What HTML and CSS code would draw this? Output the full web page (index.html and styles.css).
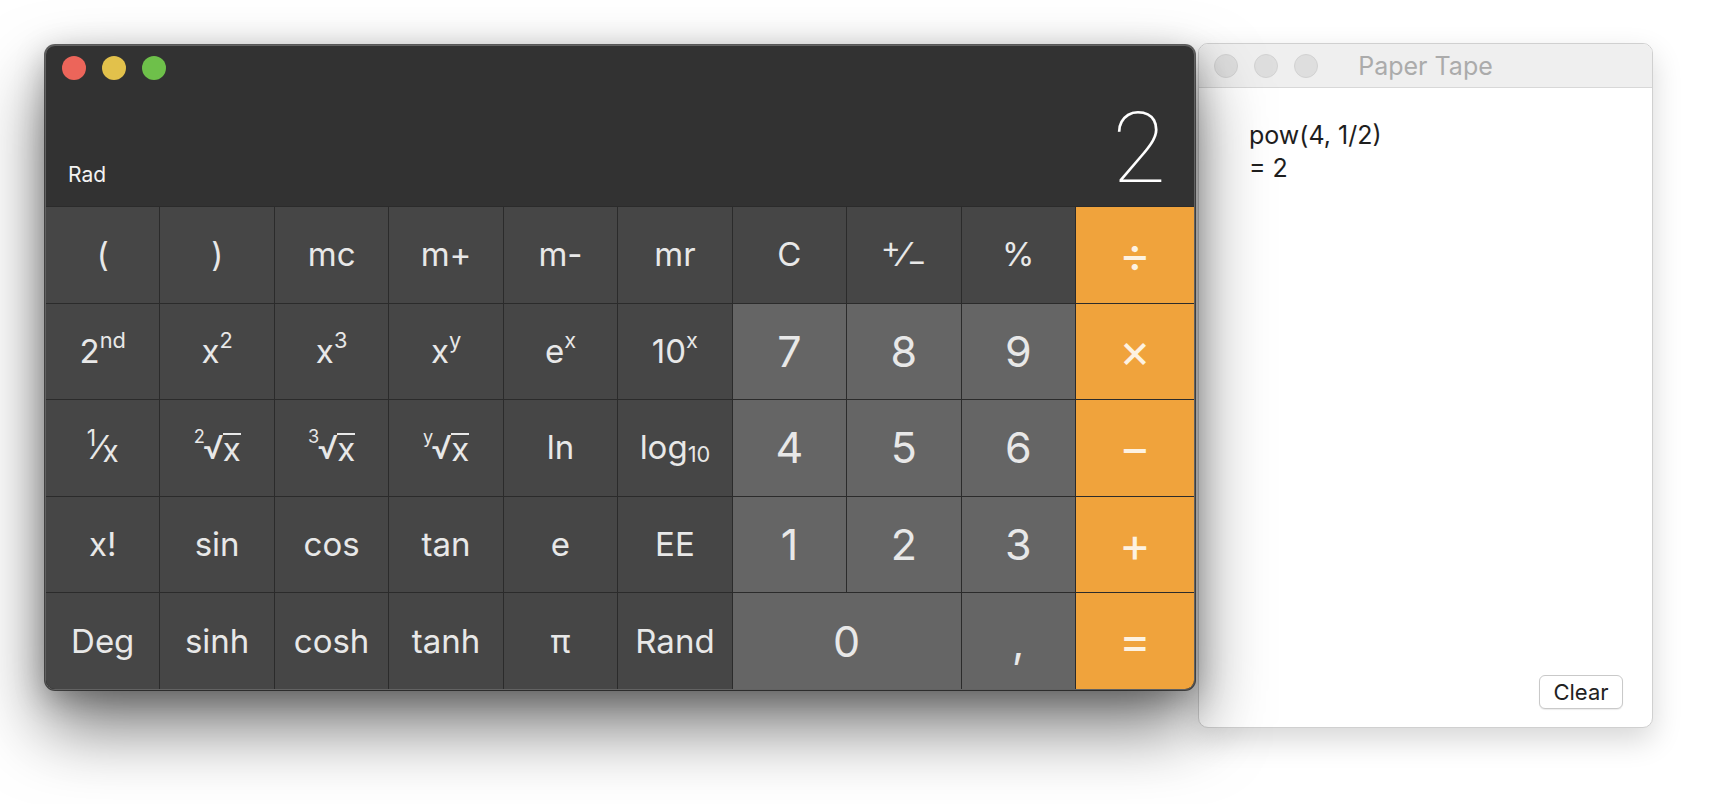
FILE: index.html
```html
<!DOCTYPE html>
<html lang="en">

<head>
    <meta charset="UTF-8">
    <meta name="viewport" content="width=device-width, initial-scale=1.0">
    <title>Calculator</title>
    <link rel="stylesheet" href="styles.css">
</head>

<body>
    <div class="desktop">

        <!-- Calculator window -->
        <section class="calc">
            <header class="calc-display">
                <div class="lights">
                    <span class="light red"></span>
                    <span class="light yellow"></span>
                    <span class="light green"></span>
                </div>
                <div class="readout">
                    <span class="mode">Rad</span>
                    <span class="value">2</span>
                </div>
            </header>

            <div class="keys">
                <button class="key">(</button>
                <button class="key">)</button>
                <button class="key">mc</button>
                <button class="key">m+</button>
                <button class="key">m-</button>
                <button class="key">mr</button>
                <button class="key">C</button>
                <button class="key"><span class="up sm">+</span>&#8260;<span class="down sm">&minus;</span></button>
                <button class="key">%</button>
                <button class="key op">&divide;</button>

                <button class="key">2<span class="up">nd</span></button>
                <button class="key">x<span class="up">2</span></button>
                <button class="key">x<span class="up">3</span></button>
                <button class="key">x<span class="up">y</span></button>
                <button class="key">e<span class="up">x</span></button>
                <button class="key">10<span class="up">x</span></button>
                <button class="key num">7</button>
                <button class="key num">8</button>
                <button class="key num">9</button>
                <button class="key op">&times;</button>

                <button class="key"><span class="up one">1</span>&#8260;<span class="frac-x">x</span></button>
                <button class="key"><span class="idx">2</span>&radic;<span class="rad">x</span></button>
                <button class="key"><span class="idx">3</span>&radic;<span class="rad">x</span></button>
                <button class="key"><span class="idx">y</span>&radic;<span class="rad">x</span></button>
                <button class="key">ln</button>
                <button class="key">log<span class="low">10</span></button>
                <button class="key num">4</button>
                <button class="key num">5</button>
                <button class="key num">6</button>
                <button class="key op">&minus;</button>

                <button class="key">x!</button>
                <button class="key">sin</button>
                <button class="key">cos</button>
                <button class="key">tan</button>
                <button class="key">e</button>
                <button class="key">EE</button>
                <button class="key num">1</button>
                <button class="key num">2</button>
                <button class="key num">3</button>
                <button class="key op">+</button>

                <button class="key">Deg</button>
                <button class="key">sinh</button>
                <button class="key">cosh</button>
                <button class="key">tanh</button>
                <button class="key">&pi;</button>
                <button class="key">Rand</button>
                <button class="key num zero">0</button>
                <button class="key num">,</button>
                <button class="key op">=</button>
            </div>
        </section>

        <!-- Paper Tape window -->
        <section class="tape">
            <header class="tape-bar">
                <div class="lights">
                    <span class="light off"></span>
                    <span class="light off"></span>
                    <span class="light off"></span>
                </div>
                <div class="tape-title">Paper Tape</div>
            </header>
            <div class="tape-body">
                <p>pow(4, 1/2)</p>
                <p>= 2</p>
            </div>
            <footer class="tape-foot">
                <button class="btn">Clear</button>
            </footer>
        </section>

    </div>
</body>

</html>
```

FILE: styles.css
```css
body {
    margin: 0;
    background-color: #ffffff;
    font-family: 'Inter', 'Liberation Sans', sans-serif;
}

.desktop {
    display: flex;
    align-items: flex-start;
    gap: 3px;
    height: 804px;
    padding: 43px 0 0 45px;
    box-sizing: border-box;
    overflow: hidden;
}

/* window controls */
.lights {
    display: flex;
    gap: 16px;
}

.light {
    width: 24px;
    height: 24px;
    border-radius: 50%;
    box-sizing: border-box;
}

.red {
    background-color: #ec655a;
}

.yellow {
    background-color: #e2c14b;
}

.green {
    background-color: #6ec04a;
}

.off {
    background-color: #dedede;
    border: 1px solid #d2d2d2;
}

/* calculator */
.calc {
    position: relative;
    z-index: 2;
    width: 1150px;
    height: 645px;
    margin-top: 2px;
    box-sizing: border-box;
    display: flex;
    flex-direction: column;
    background-color: #323232;
    border: 1px solid #626262;
    border-radius: 10px;
    overflow: hidden;
    box-shadow: 0 0 0 1px rgba(0, 0, 0, 0.6),
        0 36px 70px rgba(0, 0, 0, 0.55),
        0 8px 30px rgba(0, 0, 0, 0.25);
}

.calc-display {
    height: 160px;
    box-sizing: border-box;
    display: flex;
    flex-direction: column;
    padding: 10px 28px 8px 16px;
}

.readout {
    margin-top: auto;
    display: flex;
    justify-content: space-between;
    align-items: baseline;
    padding-left: 6px;
}

.mode {
    font-size: 21px;
    color: #f2f2f2;
}

.value {
    font-family: 'Roboto', 'Inter', sans-serif;
    font-weight: 100;
    font-size: 98px;
    line-height: 1;
    color: #ffffff;
}

.keys {
    flex: 1;
    display: grid;
    grid-template-columns: repeat(9, 1fr) 118px;
    grid-template-rows: repeat(5, 1fr);
    gap: 1px;
    padding-top: 1px;
    background-color: #2b2b2b;
}

.key {
    display: flex;
    align-items: center;
    justify-content: center;
    padding: 0;
    border: none;
    background-color: #464646;
    color: #e8e8e8;
    font-family: 'Inter', 'Liberation Sans', sans-serif;
    font-size: 33px;
    line-height: 1;
}

.key.num {
    background-color: #656565;
    font-size: 43px;
}

.key.zero {
    grid-column: span 2;
}

.key.op {
    background-color: #f0a33c;
    color: #fdf2e2;
    font-size: 48px;
}

.up,
.down,
.low,
.idx {
    position: relative;
    font-size: 0.66em;
}

.up {
    top: -0.5em;
}

.up.sm {
    font-size: 0.9em;
    top: -0.22em;
}

.down.sm {
    font-size: 0.9em;
    top: 0.22em;
}

.up.one {
    font-size: 0.7em;
    top: -0.4em;
}

.low {
    top: 0.3em;
}

.idx {
    font-size: 0.55em;
    top: -0.65em;
    margin-right: -0.1em;
}

.frac-x {
    font-size: 0.9em;
    position: relative;
    top: 0.12em;
}

.rad {
    border-top: 2px solid #e8e8e8;
    padding-top: 1px;
    margin-left: -1px;
    line-height: 0.8;
}

/* paper tape */
.tape {
    position: relative;
    z-index: 1;
    width: 455px;
    height: 685px;
    box-sizing: border-box;
    display: flex;
    flex-direction: column;
    background-color: #ffffff;
    border: 1px solid #d0d0d0;
    border-radius: 10px;
    overflow: hidden;
    box-shadow: 0 12px 30px rgba(0, 0, 0, 0.16);
}

.tape-bar {
    height: 44px;
    box-sizing: border-box;
    display: grid;
    grid-template-columns: 1fr auto 1fr;
    align-items: center;
    padding: 0 15px;
    background-color: #efefef;
    border-bottom: 1px solid #d8d8d8;
}

.tape-title {
    font-size: 25px;
    color: #ababab;
}

.tape-body {
    flex: 1;
    padding: 31px 50px;
    font-size: 25px;
    line-height: 33px;
    color: #1e1e1e;
}

.tape-body p {
    margin: 0;
}

.tape-foot {
    display: flex;
    justify-content: flex-end;
    padding: 0 29px 18px;
}

.btn {
    width: 84px;
    height: 34px;
    padding: 0;
    background-color: #ffffff;
    border: 1px solid #c9c9c9;
    border-radius: 6px;
    box-shadow: 0 1px 1px rgba(0, 0, 0, 0.08);
    color: #222222;
    font-family: 'Inter', 'Liberation Sans', sans-serif;
    font-size: 22px;
}
```
